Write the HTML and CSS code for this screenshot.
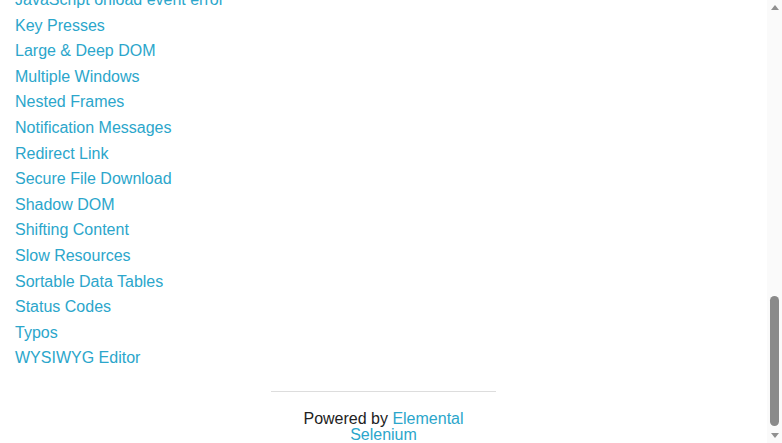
FILE: index.html
```html
<!DOCTYPE html>
<html>
<head>
<meta charset="utf-8">
<title>The Internet</title>
<link rel="stylesheet" href="styles.css">
</head>
<body>
<div class="page">
  <div class="viewport">
    <div class="content">
      <ul class="examples">
        <li><a href="#">Inputs</a></li>
        <li><a href="#">JQuery UI Menus</a></li>
        <li><a href="#">JavaScript Alerts</a></li>
        <li><a href="#">JavaScript onload event error</a></li>
        <li><a href="#">Key Presses</a></li>
        <li><a href="#">Large &amp; Deep DOM</a></li>
        <li><a href="#">Multiple Windows</a></li>
        <li><a href="#">Nested Frames</a></li>
        <li><a href="#">Notification Messages</a></li>
        <li><a href="#">Redirect Link</a></li>
        <li><a href="#">Secure File Download</a></li>
        <li><a href="#">Shadow DOM</a></li>
        <li><a href="#">Shifting Content</a></li>
        <li><a href="#">Slow Resources</a></li>
        <li><a href="#">Sortable Data Tables</a></li>
        <li><a href="#">Status Codes</a></li>
        <li><a href="#">Typos</a></li>
        <li><a href="#">WYSIWYG Editor</a></li>
      </ul>
      <div class="footer">
        <hr class="rule">
        <div class="powered">Powered by <a href="#">Elemental Selenium</a></div>
      </div>
    </div>
  </div>
  <div class="scrollbar">
    <div class="sb-btn"><span class="arrow-up"></span></div>
    <div class="sb-track"><div class="sb-thumb"></div></div>
    <div class="sb-btn sb-btn-down"><span class="arrow-down"></span></div>
  </div>
</div>
</body>
</html>
```
FILE: styles.css
```css
html, body {
  margin: 0;
  padding: 0;
  background: #fff;
}
body {
  font-family: "Liberation Sans", Arial, sans-serif;
  font-size: 16px;
  color: #222;
}
a {
  color: #2ba6cb;
  text-decoration: none;
}
.page {
  display: flex;
  width: 782px;
  height: 443px;
  overflow: hidden;
}
.viewport {
  flex: 1;
  display: flex;
  flex-direction: column;
  justify-content: flex-end;
  overflow: hidden;
}
.content {
  display: flex;
  flex-direction: column;
  padding-bottom: 0;
}
.examples {
  list-style: none;
  margin: 0;
  padding: 0 0 0 15px;
  line-height: 25.6px;
}
.footer {
  display: flex;
  flex-direction: column;
  align-items: center;
}
.rule {
  width: 225px;
  margin: 20px 0 19px;
  border: 0;
  border-top: 1px solid #ddd;
  height: 0;
}
.powered {
  width: 225px;
  text-align: center;
  line-height: 16px;
}
.scrollbar {
  width: 15px;
  flex: none;
  display: flex;
  flex-direction: column;
  background: #fafafa;
}
.sb-btn {
  height: 15px;
  display: flex;
  justify-content: center;
  align-items: center;
}
.arrow-up {
  width: 0;
  height: 0;
  border-left: 4.5px solid transparent;
  border-right: 4.5px solid transparent;
  border-bottom: 5px solid #8f8f8f;
}
.arrow-down {
  width: 0;
  height: 0;
  border-left: 4.5px solid transparent;
  border-right: 4.5px solid transparent;
  border-top: 5px solid #8f8f8f;
}
.sb-track {
  flex: 1;
  display: flex;
  flex-direction: column;
  justify-content: flex-end;
  align-items: center;
  padding-bottom: 2px;
}
.sb-thumb {
  width: 9px;
  height: 130px;
  border-radius: 5px;
  background: #8a8a8a;
}
```
